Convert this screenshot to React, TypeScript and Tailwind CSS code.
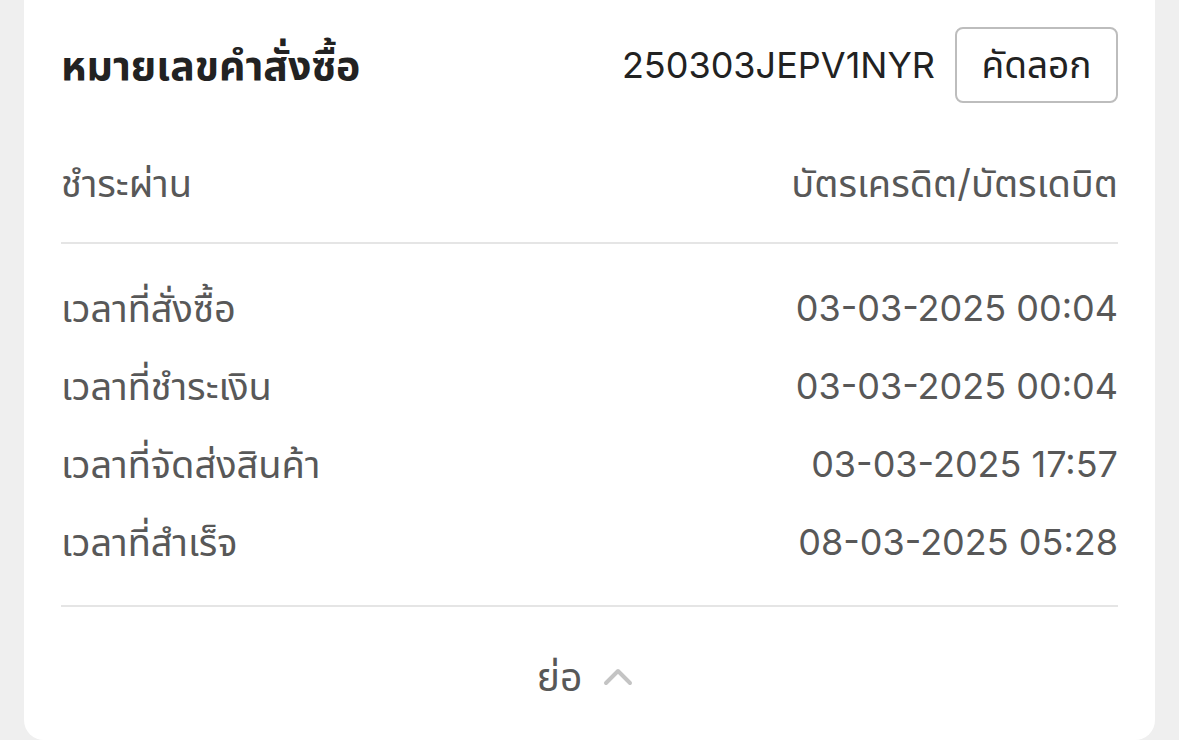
import { ChevronUp } from "lucide-react";

const rows = [
  { label: "เวลาที่สั่งซื้อ", value: "03-03-2025 00:04" },
  { label: "เวลาที่ชำระเงิน", value: "03-03-2025 00:04" },
  { label: "เวลาที่จัดส่งสินค้า", value: "03-03-2025 17:57" },
  { label: "เวลาที่สำเร็จ", value: "08-03-2025 05:28" },
];

export default function App() {
  return (
    <div
      className="min-h-[740px] bg-[#efefef] px-6"
      style={{ fontFamily: 'Inter, "Noto Sans", "Noto Sans Thai", sans-serif' }}
    >
      <div className="h-[740px] rounded-b-[20px] bg-white px-[37px]">
        {/* order number */}
        <div className="flex items-center justify-between pt-[27px]">
          <h1 className="text-[41px] leading-[50px] font-bold text-[#222]">
            หมายเลขคำสั่งซื้อ
          </h1>
          <div className="flex items-center gap-5">
            <span className="text-[36px] text-[#222]">250303JEPV1NYR</span>
            <button className="flex h-[76px] w-[163px] items-center justify-center rounded-[8px] border-2 border-[#bdbdbd] text-[37px] text-[#222]">
              คัดลอก
            </button>
          </div>
        </div>

        <div className="mt-[40px] flex h-[80px] items-center justify-between text-[38px] text-[#585858]">
          <span>ชำระผ่าน</span>
          <span>บัตรเครดิต/บัตรเดบิต</span>
        </div>
        <div className="mt-[19px] h-[2px] bg-[#e5e5e5]" />

        <div className="pt-[25px]">
          {rows.map((r) => (
            <div
              key={r.label}
              className="flex h-[78px] items-center justify-between text-[#585858]"
            >
              <span className="text-[38px]">{r.label}</span>
              <span className="text-[36px]">{r.value}</span>
            </div>
          ))}
        </div>
        <div className="mt-[24px] h-[2px] bg-[#e5e5e5]" />

        <div className="flex h-[140px] items-center justify-center gap-3">
          <span className="text-[39px] text-[#585858]">ย่อ</span>
          <ChevronUp className="h-[48px] w-[48px] text-[#c4c4c4]" strokeWidth={2} />
        </div>
      </div>
    </div>
  );
}
